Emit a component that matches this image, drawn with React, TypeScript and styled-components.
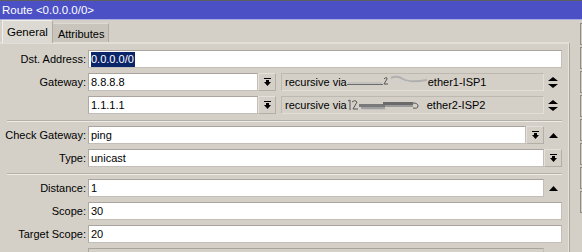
import styled, { createGlobalStyle } from "styled-components";

const GlobalStyle = createGlobalStyle`
  html, body {
    margin: 0;
    padding: 0;
    background: #d4d0c8;
  }
  body {
    font-family: "Liberation Sans", Arial, sans-serif;
    font-size: 11px;
    color: #000;
  }
`;

const DropIcon = () => (
  <svg width="7" height="9" viewBox="0 0 7 9">
    <rect x="0" y="0" width="7" height="1" fill="#000" />
    <polygon points="2,2 5,2 5,4 7,4 3.5,8 0,4 2,4" fill="#000" />
  </svg>
);

const UpIcon = () => (
  <svg width="9" height="5" viewBox="0 0 9 5">
    <polygon points="0,5 9,5 4.5,0" fill="#000" />
  </svg>
);

const UpDownIcon = () => (
  <svg width="10" height="11" viewBox="0 0 10 11">
    <polygon points="0,4 10,4 5,0" fill="#000" />
    <polygon points="0,7 10,7 5,11" fill="#000" />
  </svg>
);

// smeared-out part of the screenshot (hidden next hop address)
const ScribbleOne = () => (
  <svg width="80" height="16" viewBox="0 0 80 16">
    <line x1="0" y1="10.5" x2="36" y2="10.5" stroke="#6b6b6b" />
    <line x1="1" y1="9" x2="35" y2="9" stroke="#b3b3b3" />
    <path d="M37 5 Q40 2 40 5 L37 10 L41 10" stroke="#555" fill="none" />
    <path d="M44 4 Q50 1 56 5 T80 6" stroke="#b0b0b0" strokeWidth="2" fill="none" />
    <path d="M46 8 Q54 6 62 8" stroke="#cfcfcf" fill="none" />
  </svg>
);

const ScribbleTwo = () => (
  <svg width="79" height="16" viewBox="0 0 79 16">
    <path d="M1 4 L3 3 L3 13" stroke="#555" fill="none" />
    <path d="M5 5 Q8 2 10 5 L6 12 L11 12" stroke="#555" fill="none" />
    <rect x="12" y="7" width="26" height="3" fill="#7a7a7a" />
    <rect x="14" y="10" width="24" height="2" fill="#a0a0a0" />
    <rect x="36" y="5" width="30" height="3" fill="#6a6a6a" />
    <rect x="38" y="8" width="28" height="2" fill="#9a9a9a" />
    <path d="M66 6 Q71 6 71 9 Q71 12 66 11" stroke="#555" fill="none" />
    <line x1="16" y1="12.5" x2="40" y2="12.5" stroke="#c4c4c4" />
  </svg>
);

const App = () => {
  return (
    <>
      <GlobalStyle />
      <Window>
        <TitleBar>Route &lt;0.0.0.0/0&gt;</TitleBar>
        <Body>
          <Main>
            <TabStrip>
              <Tab active>General</Tab>
              <Tab>Attributes</Tab>
            </TabStrip>
            <Panel>
              <Rows>
                <Row>
                  <Label>Dst. Address:</Label>
                  <Controls>
                    <TextField>
                      <Selected>0.0.0.0/0</Selected>
                    </TextField>
                  </Controls>
                </Row>
                <Row>
                  <Label>Gateway:</Label>
                  <Controls>
                    <TextField width={170}>8.8.8.8</TextField>
                    <DropButton>
                      <DropIcon />
                    </DropButton>
                    <ReadField>
                      recursive via <ScribbleOne /> ether1-ISP1
                    </ReadField>
                    <SideIcon>
                      <UpDownIcon />
                    </SideIcon>
                  </Controls>
                </Row>
                <Row>
                  <Label />
                  <Controls>
                    <TextField width={170}>1.1.1.1</TextField>
                    <DropButton>
                      <DropIcon />
                    </DropButton>
                    <ReadField>
                      recursive via <ScribbleTwo /> ether2-ISP2
                    </ReadField>
                    <SideIcon>
                      <UpDownIcon />
                    </SideIcon>
                  </Controls>
                </Row>
                <Separator />
                <Row>
                  <Label>Check Gateway:</Label>
                  <Controls>
                    <TextField>ping</TextField>
                    <DropButton>
                      <DropIcon />
                    </DropButton>
                    <SideIcon>
                      <UpIcon />
                    </SideIcon>
                  </Controls>
                </Row>
                <Row>
                  <Label>Type:</Label>
                  <Controls>
                    <TextField>unicast</TextField>
                    <DropButton>
                      <DropIcon />
                    </DropButton>
                  </Controls>
                </Row>
                <Separator />
                <Row>
                  <Label>Distance:</Label>
                  <Controls>
                    <TextField>1</TextField>
                    <SideIcon>
                      <UpIcon />
                    </SideIcon>
                  </Controls>
                </Row>
                <Row>
                  <Label>Scope:</Label>
                  <Controls>
                    <TextField>30</TextField>
                  </Controls>
                </Row>
                <Row>
                  <Label>Target Scope:</Label>
                  <Controls>
                    <TextField>20</TextField>
                  </Controls>
                </Row>
                <Row>
                  <Label>Routing Mark:</Label>
                  <Controls>
                    <TextField disabled />
                    <SideIcon />
                  </Controls>
                </Row>
              </Rows>
            </Panel>
          </Main>
          {/* dialog buttons, only their left edges are in view */}
          <ButtonColumn>
            {Array.from({ length: 8 }).map((_, i) => (
              <SideButton key={i} />
            ))}
          </ButtonColumn>
        </Body>
      </Window>
    </>
  );
};

const Window = styled.div`
  width: 582px;
  height: 252px;
  overflow: hidden;
  display: flex;
  flex-direction: column;
  background: #d4d0c8;
`;

const TitleBar = styled.div`
  height: 18px;
  flex-shrink: 0;
  display: flex;
  align-items: center;
  padding-left: 2px;
  border-top: 1px solid #5e5e5e;
  border-bottom: 1px solid #a9abe0;
  background: #4b50c4;
  color: #fff;
  font-size: 11.5px;
`;

const Body = styled.div`
  display: flex;
  flex: 1;
  min-height: 0;
`;

const Main = styled.div`
  width: 570px;
  flex-shrink: 0;
  display: flex;
  flex-direction: column;
`;

const TabStrip = styled.div`
  display: flex;
  align-items: flex-end;
  height: 22px;
  padding-left: 2px;
`;

const Tab = styled.div<{ active?: boolean }>`
  position: relative;
  z-index: ${(p) => (p.active ? 1 : 0)};
  height: ${(p) => (p.active ? "23px" : "19px")};
  margin-bottom: ${(p) => (p.active ? "-1px" : "0")};
  padding: 0 4px;
  display: flex;
  align-items: center;
  box-sizing: border-box;
  font-size: ${(p) => (p.active ? "11.5px" : "11px")};
  background: ${(p) => (p.active ? "#dcd9d2" : "#c9c5bd")};
  border-top: 1px solid ${(p) => (p.active ? "#f1efea" : "#dedbd4")};
  border-left: 1px solid ${(p) => (p.active ? "#f1efea" : "transparent")};
  border-right: 1px solid #b0aca4;
  padding-top: ${(p) => (p.active ? "0" : "1px")};
`;

const Panel = styled.div`
  flex: 1;
  padding: 6px 7px 0 0;
  border-top: 2px solid #e2dfd8;
  border-right: 1px solid #aaa69e;
  box-shadow: inset -1px 0 0 #e6e3dd;
  background: #d4d0c8;
`;

const Rows = styled.div`
  display: flex;
  flex-direction: column;
  gap: 5px;
`;

const Row = styled.div`
  display: flex;
  height: 18px;
  flex-shrink: 0;
`;

const Label = styled.div`
  width: 86px;
  flex-shrink: 0;
  text-align: right;
  line-height: 18px;
  white-space: nowrap;
`;

const Controls = styled.div`
  flex: 1;
  display: flex;
  margin-left: 2px;
`;

const TextField = styled.div<{ width?: number; disabled?: boolean }>`
  ${(p) => (p.width ? `width: ${p.width}px;` : "flex: 1;")}
  box-sizing: border-box;
  height: 18px;
  padding-left: 2px;
  line-height: 16px;
  white-space: nowrap;
  overflow: hidden;
  background: ${(p) => (p.disabled ? "#d4d0c8" : "#fff")};
  border: 1px solid #c3bfb8;
  border-top-color: #a9a59e;
  border-left-color: #aeaaa3;
`;

const Selected = styled.span`
  display: inline-block;
  background: #0a246a;
  color: #fff;
  line-height: 15px;
  padding: 0 1px 0 0;
`;

const DropButton = styled.div`
  width: 18px;
  height: 18px;
  flex-shrink: 0;
  box-sizing: border-box;
  display: flex;
  align-items: center;
  justify-content: center;
  background: #d4d0c8;
  border: 1px solid #e4e1db;
  border-right-color: #b3afa7;
  border-bottom-color: #b3afa7;
`;

const ReadField = styled.div`
  flex: 1;
  margin-left: 5px;
  box-sizing: border-box;
  height: 18px;
  padding-left: 3px;
  display: flex;
  align-items: center;
  white-space: nowrap;
  overflow: hidden;
  background: #d4d0c8;
  border: 1px solid #bdb9b1;
  border-right-color: #e2dfd9;
  border-bottom-color: #e2dfd9;

  svg {
    margin: 0 1px 0 0;
    flex-shrink: 0;
  }
`;

const SideIcon = styled.div`
  width: 18px;
  flex-shrink: 0;
  display: flex;
  align-items: center;
  justify-content: center;
`;

const Separator = styled.div`
  height: 0;
  margin: 1px 0 -1px 7px;
  border-top: 1px solid #b5b1a9;
  border-bottom: 1px solid #eeece7;
`;

const ButtonColumn = styled.div`
  flex: 1;
  display: flex;
  flex-direction: column;
  gap: 2px;
  padding: 3px 0 0 10px;
  overflow: hidden;
`;

const SideButton = styled.div`
  width: 80px;
  height: 22px;
  flex-shrink: 0;
  box-sizing: border-box;
  border: 1px solid #8e8b85;
  border-right-color: #6e6b66;
  background: #d4d0c8;
`;

export default App;
